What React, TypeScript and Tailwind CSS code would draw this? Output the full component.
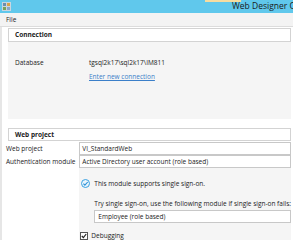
import React from "react";

export default function App() {
  const f = { fontFamily: '"Open Sans", "Noto Sans", sans-serif' };
  return (
    <div className="w-[293px] h-[240px] overflow-hidden bg-white flex flex-col text-[#222]" style={f}>
      {/* title bar */}
      <div className="h-[13px] bg-[#60c8ec] flex items-center relative shrink-0">
        <div className="absolute left-[205px] top-0 w-[36px] h-[2px] bg-[#f6dca0]" />
        <svg width="9" height="9" viewBox="0 0 9 9" className="ml-[2px]">
          <rect x="0" y="0" width="9" height="9" fill="#c9d6e0" />
          <rect x="1" y="1" width="3" height="3" fill="#6a8fb0" />
          <rect x="5" y="1" width="3" height="3" fill="#d9a24a" />
          <rect x="1" y="5" width="3" height="3" fill="#7aa05a" />
          <rect x="5" y="5" width="3" height="3" fill="#8aa8c8" />
        </svg>
        <div className="flex-1" />
        <div className="text-[8.5px] leading-none text-[#1b1b1b] whitespace-nowrap -mr-[40px] w-[101px]">Web Designer Console</div>
      </div>
      {/* menu bar */}
      <div className="h-[13px] bg-[#f3f3f3] flex items-center pl-[6px] text-[6.5px] shrink-0">File</div>
      <div className="h-[1px] bg-[#dcdcdc] shrink-0" />
      {/* content */}
      <div className="flex-1 flex flex-col border-l-[2px] border-[#e6e6e6] pl-[6px] pr-[2px] pt-[1px] text-[6.5px]">
        {/* Connection */}
        <div className="h-[14px] border border-[#d3d3d3] bg-white flex items-center pl-[6px] font-bold shrink-0">Connection</div>
        <div className="h-[77px] bg-[#f5f5f5] shrink-0 flex flex-col">
          <div className="flex mt-[17px] h-[8px] items-center">
            <div className="w-[81px] pl-[7px]">Database</div>
            <div>tgsql2k17\sql2k17\IM811</div>
          </div>
          <div className="flex mt-[6px] h-[8px] items-center">
            <div className="w-[81px]" />
            <div className="text-[#3b7fc9] underline">Enter new connection</div>
          </div>
        </div>
        <div className="h-[9px] shrink-0" />
        {/* Web project */}
        <div className="h-[13px] border border-[#d3d3d3] bg-white flex items-center pl-[6px] font-bold shrink-0">Web project</div>
        <div className="flex -ml-[4px] shrink-0">
          <div className="w-[80px] flex flex-col">
            <div className="h-[13px] flex items-center pl-[2px] pt-[3px]">Web project</div>
            <div className="h-[13px] flex items-center pl-[2px] pt-[2px]">Authentication module</div>
          </div>
          <div className="flex-1 flex flex-col pt-[1px]">
            <div className="h-[13px] border border-[#c8c8c8] bg-white flex items-center pl-[2px]">VI_StandardWeb</div>
            <div className="h-[13px] border border-[#c8c8c8] bg-white flex items-center pl-[2px]">Active Directory user account (role based)</div>
            <div className="bg-[#f5f5f5] h-[80px] flex flex-col pl-[2px]">
              <div className="flex items-center mt-[11px] h-[9px]">
                <svg width="9" height="9" viewBox="0 0 9 9" className="mr-[4px]">
                  <circle cx="4.5" cy="4.5" r="4" fill="#e9f5fc" stroke="#3aa0e0" strokeWidth="1" />
                  <path d="M2.4 4.6 L3.9 6.1 L6.7 3" fill="none" stroke="#2a8fd6" strokeWidth="1.1" />
                </svg>
                <span>This module supports single sign-on.</span>
              </div>
              <div className="pl-[13px] mt-[12px] h-[8px] flex items-center whitespace-nowrap">Try single sign-on, use the following module if single sign-on fails:</div>
              <div className="ml-[13px] mt-[2px] h-[13px] border border-[#c8c8c8] bg-white flex items-center pl-[3px]">Employee (role based)</div>
              <div className="flex items-center mt-[9px] h-[8px] -ml-[1px]">
                <div className="w-[8px] h-[8px] border border-[#555] bg-white flex items-center justify-center mr-[3px]">
                  <svg width="6" height="6" viewBox="0 0 6 6"><path d="M0.8 3 L2.4 4.6 L5.2 1" fill="none" stroke="#222" strokeWidth="1.2" /></svg>
                </div>
                <span>Debugging</span>
              </div>
            </div>
          </div>
        </div>
      </div>
    </div>
  );
}
